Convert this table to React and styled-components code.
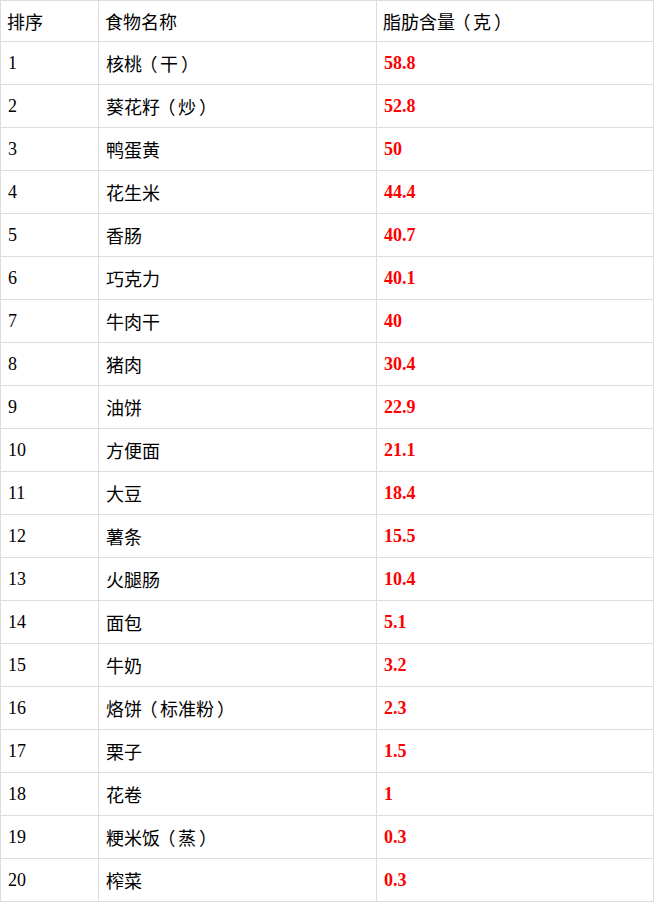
import React from 'react'
import styled, {createGlobalStyle} from 'styled-components'

const foods = [
  ['核桃（干）', '58.8'],
  ['葵花籽（炒）', '52.8'],
  ['鸭蛋黄', '50'],
  ['花生米', '44.4'],
  ['香肠', '40.7'],
  ['巧克力', '40.1'],
  ['牛肉干', '40'],
  ['猪肉', '30.4'],
  ['油饼', '22.9'],
  ['方便面', '21.1'],
  ['大豆', '18.4'],
  ['薯条', '15.5'],
  ['火腿肠', '10.4'],
  ['面包', '5.1'],
  ['牛奶', '3.2'],
  ['烙饼（标准粉）', '2.3'],
  ['栗子', '1.5'],
  ['花卷', '1'],
  ['粳米饭（蒸）', '0.3'],
  ['榨菜', '0.3'],
]

// full-width brackets sit centred in the reference font
function CjkText({children}) {
  return children.split(/([（）])/).map((part, i) =>
    part === '（' || part === '）' ? (
      <Paren key={i} $close={part === '）'}>
        {part}
      </Paren>
    ) : (
      part
    ),
  )
}

export default function App() {
  return (
    <>
      <GlobalStyle />
      <Table>
        <colgroup>
          <col style={{width: 98}} />
          <col style={{width: 278}} />
          <col />
        </colgroup>
        <thead>
          <tr>
            <HeadCell>排序</HeadCell>
            <HeadCell>食物名称</HeadCell>
            <HeadCell>
              <CjkText>脂肪含量（克）</CjkText>
            </HeadCell>
          </tr>
        </thead>
        <tbody>
          {foods.map(([name, fat], i) => (
            <tr key={i}>
              <Cell>{i + 1}</Cell>
              <Cell>
                <CjkText>{name}</CjkText>
              </Cell>
              <Cell>
                <Fat>{fat}</Fat>
              </Cell>
            </tr>
          ))}
        </tbody>
      </Table>
    </>
  )
}

const GlobalStyle = createGlobalStyle`
  body {
    margin: 0;
    background: #fff;
    font-family: "Liberation Serif", "Noto Sans CJK SC", serif;
    font-size: 18px;
    color: #000;
  }
`

const Table = styled.table`
  width: 654px;
  border-collapse: collapse;
  table-layout: fixed;
`

const HeadCell = styled.th`
  height: 40px;
  padding: 0 6px;
  border: 1px solid #ddd;
  text-align: left;
  font-weight: 400;
  font-family: "Noto Sans CJK SC", sans-serif;
  font-size: 18px;
  vertical-align: middle;
`

const Cell = styled.td`
  height: 42px;
  padding: 0 6px 0 7px;
  border: 1px solid #ddd;
  vertical-align: middle;
`

const Paren = styled.span`
  font-family: "Noto Sans CJK SC", sans-serif;
  font-feature-settings: "halt";
  margin: ${(p) => (p.$close ? '0 0.33em 0 0.17em' : '0 0.14em 0 0.36em')};
`

const Fat = styled.strong`
  color: #f00;
  font-weight: 700;
`
